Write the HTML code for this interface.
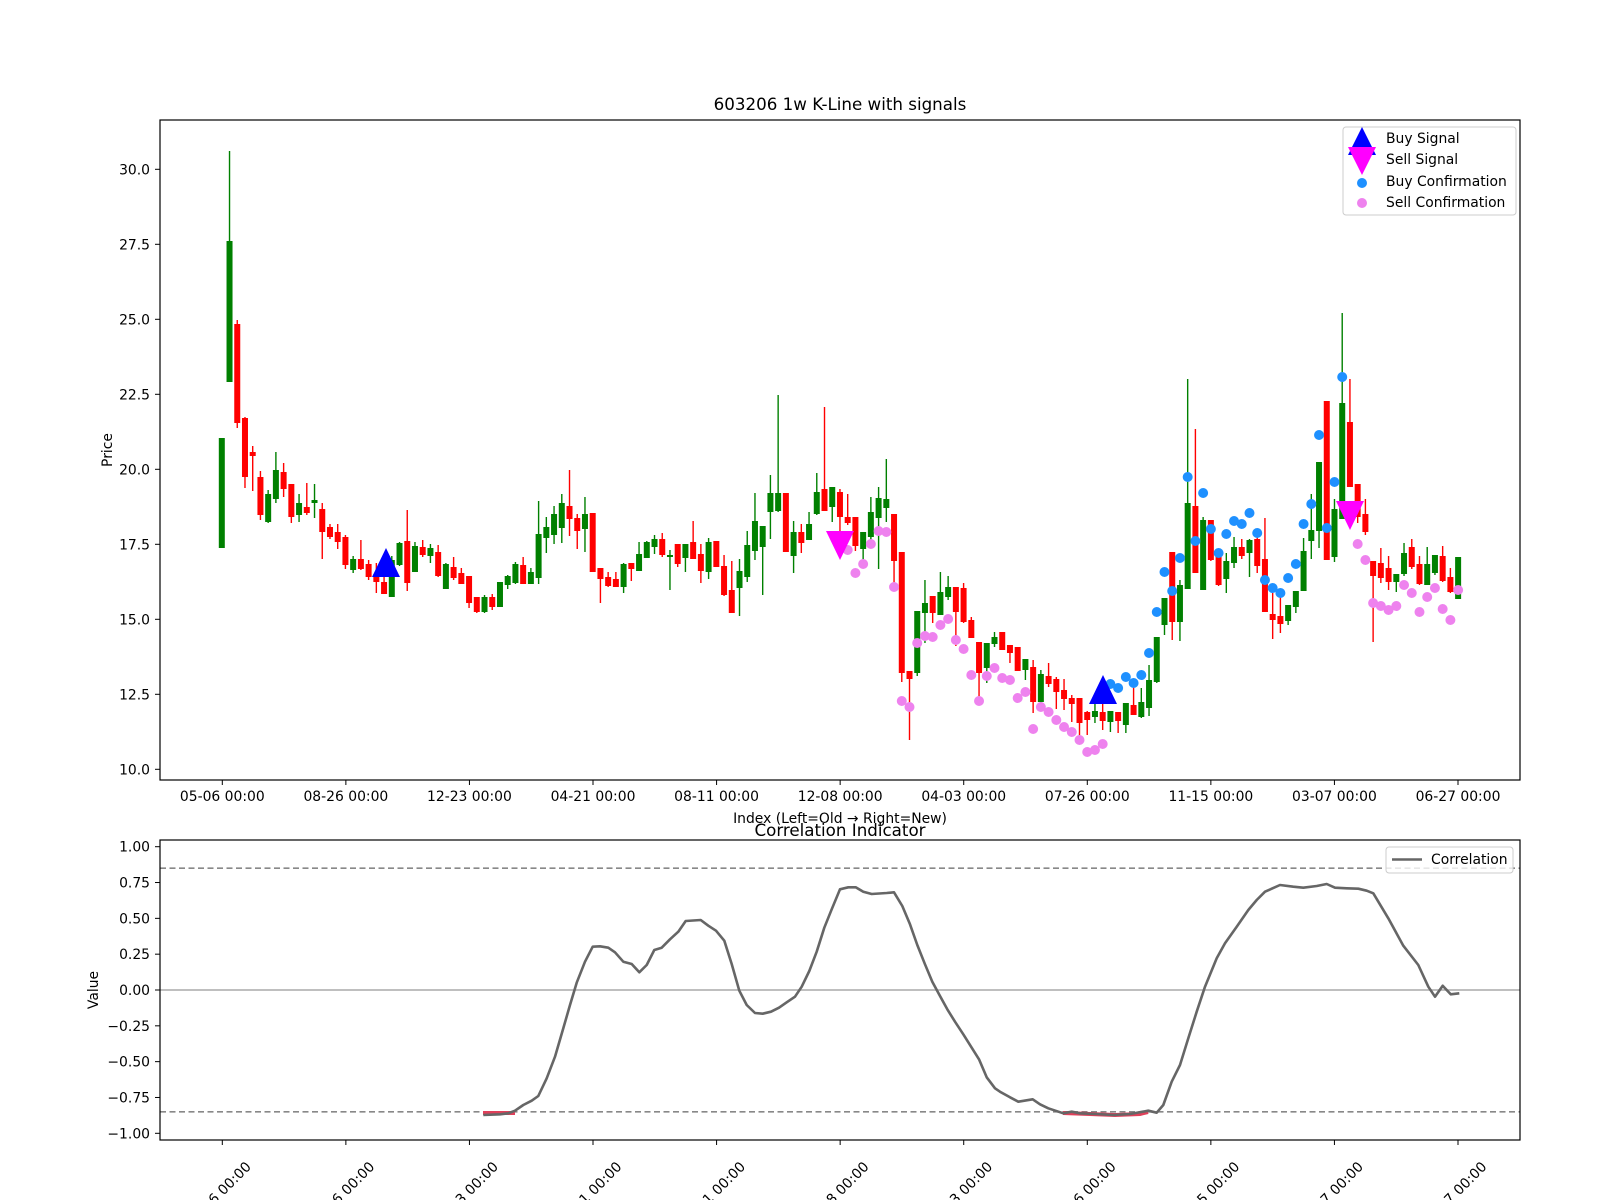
<!DOCTYPE html>
<html><head><meta charset="utf-8"><style>
html,body{margin:0;padding:0;background:#fff;}
svg{display:block;font-family:"DejaVu Sans","Liberation Sans",sans-serif;}
</style></head><body>
<svg id="s" width="1600" height="1200" viewBox="0 0 1600 1200" xmlns="http://www.w3.org/2000/svg">
<rect width="1600" height="1200" fill="#fff"/>
<g id="cand"></g>
<g id="dots"></g>
<polygon points="372,577 400,577 386,548" fill="#0000ff"/>
<polygon points="1089,704 1117,704 1103,675" fill="#0000ff"/>
<polygon points="826,531 854,531 840,560" fill="#ff00ff"/>
<polygon points="1336,501 1364,501 1350,530" fill="#ff00ff"/>
<rect x="160" y="120" width="1360" height="660" fill="none" stroke="#000" stroke-width="1.2"/>
<text x="840" y="110" font-size="16.7" text-anchor="middle">603206 1w K-Line with signals</text>
<g font-size="13.9" text-anchor="end" id="ytop"></g>
<g font-size="13.9" text-anchor="middle" id="xtop"></g>
<text x="840" y="823" font-size="13.9" text-anchor="middle">Index (Left=Old → Right=New)</text>
<text transform="translate(112,450) rotate(-90)" font-size="13.9" text-anchor="middle">Price</text>
<rect x="1343" y="127" width="173" height="88" rx="3" fill="#fff" fill-opacity="0.8" stroke="#ccc"/>
<polygon points="1348,155 1376,155 1362,127" fill="#0000ff"/>
<polygon points="1348,147 1376,147 1362,175" fill="#ff00ff"/>
<circle cx="1362" cy="183" r="5" fill="#1e90ff"/>
<circle cx="1362" cy="203" r="5" fill="#ee82ee"/>
<g font-size="13.9"><text x="1386" y="143">Buy Signal</text><text x="1386" y="164">Sell Signal</text><text x="1386" y="186">Buy Confirmation</text><text x="1386" y="207">Sell Confirmation</text></g>
<text x="840" y="836" font-size="16.7" text-anchor="middle">Correlation Indicator</text>
<line x1="160" y1="868.2" x2="1520" y2="868.2" stroke="#888" stroke-width="1.6" stroke-dasharray="6,3.5"/>
<line x1="160" y1="1111.8" x2="1520" y2="1111.8" stroke="#888" stroke-width="1.6" stroke-dasharray="6,3.5"/>
<line x1="160" y1="990" x2="1520" y2="990" stroke="#aaa" stroke-width="1.6"/>
<polyline points="483,1113 515,1113" fill="none" stroke="#e0405a" stroke-width="4"/>
<polyline points="1063,1113 1090,1114 1115,1115 1140,1114 1148,1112" fill="none" stroke="#e0405a" stroke-width="4"/>
<polyline id="corr" fill="none" stroke="#666" stroke-width="2.6" stroke-linejoin="round"/>
<rect x="160" y="840" width="1360" height="300" fill="none" stroke="#000" stroke-width="1.2"/>
<g font-size="13.9" text-anchor="end" id="ybot"></g>
<g font-size="13.9" text-anchor="middle" id="xbot"></g>
<text transform="translate(98,990) rotate(-90)" font-size="13.9" text-anchor="middle">Value</text>
<rect x="1386" y="847" width="127" height="26" rx="3" fill="#fff" fill-opacity="0.8" stroke="#ccc"/>
<line x1="1392" y1="859.5" x2="1422" y2="859.5" stroke="#666" stroke-width="2.6"/>
<text x="1431" y="864" font-size="13.9">Correlation</text>
</svg>
<script>
var NS="http://www.w3.org/2000/svg";
function el(p,t,a,txt){var e=document.createElementNS(NS,t);for(var k in a)e.setAttribute(k,a[k]);if(txt)e.textContent=txt;p.appendChild(e);return e;}
function X(i){return 221.8+7.727*i;}
var C=[
[438,548,438,548,'g'],[241,382,151,382,'g'],[324,423,320,428,'r'],[418,477,417,488,'r'],[452,456,446,491,'r'],
[477,515,471,520,'r'],[494,522,490,523,'g'],[470,499,452,503,'g'],[472,489,463,497,'r'],[484,517,484,523,'r'],
[503,515,494,522,'g'],[507,513,483,515,'r'],[500,503,484,518,'g'],[509,532,503,559,'r'],[527,537,524,539,'r'],
[532,542,524,549,'r'],[537,565,535,569,'r'],[559,570,556,573,'g'],[559,569,540,570,'r'],[564,577,560,580,'r'],
[574,582,563,593,'r'],[582,594,560,594,'r'],[560,597,556,597,'g'],[543,565,542,566,'g'],[541,583,510,591,'r'],
[546,572,542,572,'g'],[547,555,540,557,'r'],[548,556,544,563,'g'],[552,576,545,577,'r'],[564,589,563,589,'g'],
[567,578,557,580,'r'],[573,584,568,584,'r'],[576,603,576,608,'r'],[597,612,597,613,'r'],[597,612,595,613,'g'],
[597,607,594,610,'r'],[582,607,582,607,'g'],[576,585,575,589,'g'],[564,583,562,584,'g'],[565,584,557,584,'r'],
[572,584,568,584,'g'],[534,578,501,584,'g'],[527,538,517,553,'g'],[514,535,506,544,'g'],[503,528,494,543,'g'],
[506,519,470,536,'r'],[518,531,514,549,'r'],[514,529,497,552,'g'],[513,572,513,572,'r'],
[568,579,568,603,'r'],[577,586,572,587,'r'],[579,587,572,587,'r'],[564,587,563,593,'g'],[563,569,563,581,'r'],
[554,571,542,571,'g'],[542,558,541,558,'g'],[539,547,535,554,'g'],[539,555,533,557,'r'],[555,557,550,590,'g'],
[544,564,544,567,'r'],[544,558,544,572,'g'],[542,559,521,559,'r'],[554,571,544,583,'r'],[542,572,538,579,'g'],
[541,567,541,567,'r'],[566,595,555,596,'r'],[590,613,561,613,'r'],[571,588,559,616,'g'],[545,577,531,582,'g'],
[521,551,493,560,'g'],[526,547,526,595,'g'],[493,512,475,539,'g'],[493,511,395,512,'g'],[493,552,493,552,'r'],
[532,556,521,573,'g'],[532,543,524,553,'r'],[524,540,512,540,'g'],[492,514,473,515,'g'],[489,511,407,511,'r'],
[487,507,487,522,'g'],[492,517,489,532,'r'],[517,523,494,525,'r'],[517,546,517,551,'r'],[532,549,532,563,'g'],
[512,537,497,543,'g'],[498,518,487,569,'g'],[499,508,459,522,'g'],[514,561,514,587,'r'],[552,673,552,682,'r'],
[671,679,671,740,'r'],[611,673,611,676,'g'],[603,613,580,643,'g'],[596,613,596,623,'r'],[592,615,572,615,'g'],
[587,597,576,600,'g'],[587,612,587,646,'r'],[588,622,583,623,'r'],[620,638,617,638,'r'],[642,673,642,701,'r'],
[643,668,643,683,'g'],
[637,644,632,647,'g'],[632,650,632,650,'r'],[645,653,645,663,'r'],[647,671,647,671,'r'],[659,670,659,680,'g'],
[667,702,660,713,'r'],[674,702,670,708,'g'],[676,684,663,687,'r'],[679,692,677,709,'r'],[690,699,679,710,'r'],
[698,704,695,722,'r'],[698,723,698,737,'r'],[712,720,711,735,'r'],[711,717,702,723,'g'],[712,721,702,730,'r'],
[711,722,711,732,'g'],[712,721,712,733,'r'],[703,725,703,733,'g'],[705,715,679,715,'r'],[702,717,688,718,'g'],
[680,708,665,716,'g'],[637,682,637,683,'g'],[598,625,598,635,'g'],[552,622,552,640,'r'],[585,622,580,641,'g'],
[503,589,379,589,'g'],[506,573,429,573,'r'],[520,590,517,590,'g'],[520,560,520,561,'r'],[555,585,555,586,'r'],
[561,579,553,593,'g'],[547,563,537,568,'g'],[547,556,539,559,'r'],[540,553,539,577,'g'],[539,566,530,573,'r'],
[559,612,518,612,'r'],[614,620,593,639,'r'],[616,624,595,633,'r'],[605,621,605,625,'g'],[591,607,591,613,'g'],
[551,591,538,591,'g'],[530,541,494,559,'g'],[462,531,462,548,'g'],[401,560,401,560,'r'],[509,557,499,562,'g'],
[403,519,313,519,'g'],[422,487,379,487,'r'],[484,517,484,523,'r'],[514,532,499,535,'r'],[561,576,561,642,'r'],
[563,578,548,583,'r'],[568,582,556,590,'r'],[574,582,574,592,'g'],[553,574,543,576,'g'],[547,567,539,569,'r'],
[564,584,556,585,'r'],[564,585,547,585,'g'],[555,573,555,575,'g'],[556,581,546,582,'r'],[577,592,568,593,'r'],
[557,599,557,599,'g']];
var g=document.getElementById('cand');
C.forEach(function(c,i){var x=X(i),col=c[4]=='g'?'#008000':'#ff0000';
el(g,'line',{x1:x,x2:x,y1:c[2],y2:c[3],stroke:col,'stroke-width':1.4});
el(g,'rect',{x:x-3,y:c[0],width:6,height:Math.max(1,c[1]-c[0]),fill:col});});
var S=[[81,550],[82,573],[83,564],[84,544],[85,531],[86,532],[87,587],[88,701],[89,707],[90,643],[91,636],[92,637],[93,625],[94,619],[95,640],[96,649],[97,675],[98,701],[99,676],[100,668],[101,678],[102,680],[103,698],[104,692],[105,729],[106,707],[107,712],[108,720],[109,727],[110,732],[111,740],[112,752],[113,750],[114,744],[147,544],[148,560],[149,603],[150,606],[151,610],[152,606],[153,585],[154,593],[155,612],[156,597],[157,588],[158,609],[159,620],[160,590]];
var B=[[115,684],[116,688],[117,677],[118,683],[119,675],[120,653],[121,612],[122,572],[123,591],[124,558],[125,477],[126,541],[127,493],[128,529],[129,553],[130,534],[131,521],[132,524],[133,513],[134,533],[135,580],[136,588],[137,593],[138,578],[139,564],[140,524],[141,504],[142,435],[143,528],[144,482],[145,377]];
var d=document.getElementById('dots');
S.forEach(function(p){el(d,'circle',{cx:X(p[0]),cy:p[1],r:5,fill:'#ee82ee'});});
B.forEach(function(p){el(d,'circle',{cx:X(p[0]),cy:p[1],r:5,fill:'#1e90ff'});});
var yt=document.getElementById('ytop');
for(var k=0;k<9;k++){var p=10+2.5*k,y=769.3-30*(p-10);
el(yt,'line',{x1:155,x2:160,y1:y,y2:y,stroke:'#000','stroke-width':1});
el(yt,'text',{x:150,y:y+5},p.toFixed(1));}
var yb=document.getElementById('ybot');
for(var k=0;k<9;k++){var v=-1+0.25*k,y=990-143.3*v;
el(yb,'line',{x1:155,x2:160,y1:y,y2:y,stroke:'#000','stroke-width':1});
el(yb,'text',{x:150,y:y+5},(v<0?'\u2212':'')+Math.abs(v).toFixed(2));}
var L=['05-06 00:00','08-26 00:00','12-23 00:00','04-21 00:00','08-11 00:00','12-08 00:00','04-03 00:00','07-26 00:00','11-15 00:00','03-07 00:00','06-27 00:00'];
var xt=document.getElementById('xtop'),xb=document.getElementById('xbot');
L.forEach(function(s,k){var x=222.3+123.57*k;
el(xt,'line',{x1:x,x2:x,y1:780,y2:785,stroke:'#000','stroke-width':1});
el(xt,'text',{x:x,y:801},s);
el(xb,'line',{x1:x,x2:x,y1:1140,y2:1145,stroke:'#000','stroke-width':1});
el(xb,'text',{x:0,y:5,transform:'translate('+(x-4)+',1194) rotate(-45)'},s);});
var P1=[[10,765],[60,763],[85,760],[105,752],[130,735],[155,722],[175,708],[200,655],[225,590],[250,505],[270,435],[290,368],[315,305],[338,260],[360,259],[385,263],[405,277],[430,305],[455,312],[478,337],[500,315],[523,270],[545,263],[570,238],[595,215],[617,183],[662,180],[685,197],[708,212],[733,242],[755,312],[778,392],[800,435],[825,459],[848,461],[873,455],[897,443],[920,427],[945,410],[965,380],[988,333],[1010,275],[1033,203],[1055,148],[1080,88],[1105,82],[1127,82],[1150,95],[1175,102],[1220,99],[1242,97],[1267,138],[1290,193],[1312,255],[1335,313],[1357,365],[1380,408],[1402,448],[1425,485],[1450,523],[1475,563],[1497,598],[1520,652],[1545,685]];
var P2=[[0,695],[30,712],[55,725],[98,718],[120,733],[145,745],[190,760],[215,755],[240,760],[290,762],[340,765],[390,762],[445,752],[470,758],[490,735],[515,665],[540,615],[565,535],[590,455],[615,380],[650,295],[675,250],[710,200],[745,150],[770,120],[795,95],[840,75],[880,80],[910,83],[950,78],[980,72],[1005,83],[1040,85],[1075,86],[1100,92],[1120,100],[1165,175],[1210,257],[1255,315],[1285,380],[1305,410],[1328,377],[1352,403],[1378,400]];
var pts=P1.map(function(p){return (480+p[0]/3).toFixed(1)+','+(860+p[1]/3).toFixed(1);}).concat(P2.map(function(p){return (1000+p[0]/3).toFixed(1)+','+(860+p[1]/3).toFixed(1);}));
document.getElementById('corr').setAttribute('points',pts.join(' '));
</script>
</body></html>
